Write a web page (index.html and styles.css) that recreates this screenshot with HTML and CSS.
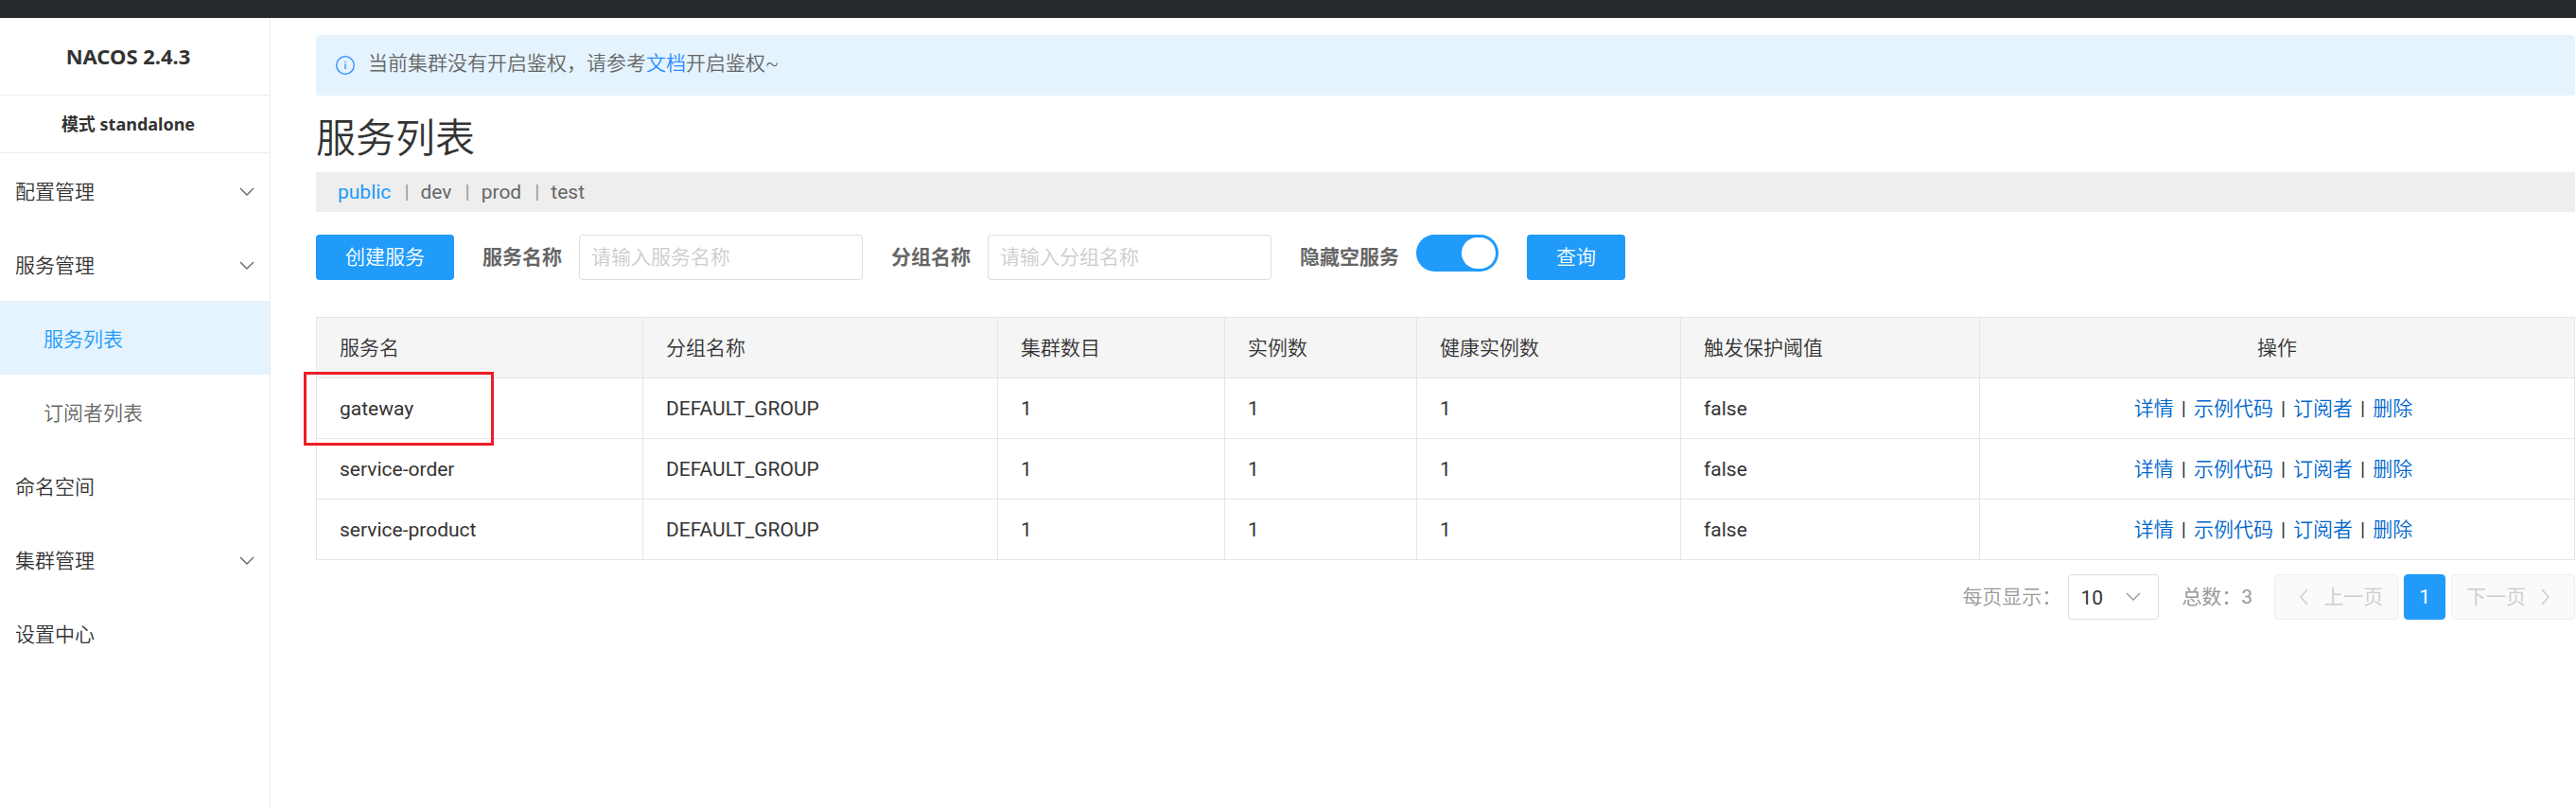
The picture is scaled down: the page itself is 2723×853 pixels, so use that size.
FILE: index.html
```html
<!DOCTYPE html>
<html lang="zh-CN">
<head>
<meta charset="utf-8">
<title>Nacos</title>
<link rel="stylesheet" href="styles.css">
</head>
<body>
<header class="topbar"></header>
<div class="shell">
  <aside class="sidebar">
    <h1 class="brand">NACOS 2.4.3</h1>
    <h2 class="mode">模式 standalone</h2>
    <nav class="menu">
      <a class="menu-item" href="#">配置管理<svg class="chevron" viewBox="0 0 16 10"><path d="M1 1l7 7 7-7"/></svg></a>
      <a class="menu-item" href="#">服务管理<svg class="chevron" viewBox="0 0 16 10"><path d="M1 1l7 7 7-7"/></svg></a>
      <a class="menu-item sub active" href="#">服务列表</a>
      <a class="menu-item sub" href="#">订阅者列表</a>
      <a class="menu-item" href="#">命名空间</a>
      <a class="menu-item" href="#">集群管理<svg class="chevron" viewBox="0 0 16 10"><path d="M1 1l7 7 7-7"/></svg></a>
      <a class="menu-item" href="#">设置中心</a>
    </nav>
  </aside>
  <main class="main">
    <div class="notice">
      <svg class="info" viewBox="0 0 20 20"><circle cx="10" cy="10" r="9.3"/><path d="M10 8.5v5.5M10 5.8v1.4"/></svg>
      <p class="notice-text">当前集群没有开启鉴权，请参考<a href="#">文档</a>开启鉴权~</p>
    </div>
    <h2 class="title">服务列表</h2>
    <div class="namespaces">
      <a class="ns current" href="#">public</a><span class="bar">|</span><a class="ns" href="#">dev</a><span class="bar">|</span><a class="ns" href="#">prod</a><span class="bar">|</span><a class="ns" href="#">test</a>
    </div>
    <form class="filters">
      <button class="btn" type="button">创建服务</button>
      <div class="field"><label for="service">服务名称</label><input class="text" id="service" type="text" placeholder="请输入服务名称"></div>
      <div class="field"><label for="group">分组名称</label><input class="text" id="group" type="text" placeholder="请输入分组名称"></div>
      <div class="field"><label for="hide">隐藏空服务</label><input class="switch" id="hide" type="checkbox" checked></div>
      <button class="btn" type="button">查询</button>
    </form>
    <table class="table">
      <colgroup><col class="c-name"><col class="c-group"><col class="c-cluster"><col class="c-inst"><col class="c-health"><col class="c-limit"><col></colgroup>
      <thead>
        <tr><th>服务名</th><th>分组名称</th><th>集群数目</th><th>实例数</th><th>健康实例数</th><th>触发保护阈值</th><th class="ops-head">操作</th></tr>
      </thead>
      <tbody>
        <tr><td class="marked">gateway</td><td>DEFAULT_GROUP</td><td>1</td><td>1</td><td>1</td><td>false</td><td class="ops"><a href="#">详情</a><span class="sep">|</span><a href="#">示例代码</a><span class="sep">|</span><a href="#">订阅者</a><span class="sep">|</span><a href="#">删除</a></td></tr>
        <tr><td>service-order</td><td>DEFAULT_GROUP</td><td>1</td><td>1</td><td>1</td><td>false</td><td class="ops"><a href="#">详情</a><span class="sep">|</span><a href="#">示例代码</a><span class="sep">|</span><a href="#">订阅者</a><span class="sep">|</span><a href="#">删除</a></td></tr>
        <tr><td>service-product</td><td>DEFAULT_GROUP</td><td>1</td><td>1</td><td>1</td><td>false</td><td class="ops"><a href="#">详情</a><span class="sep">|</span><a href="#">示例代码</a><span class="sep">|</span><a href="#">订阅者</a><span class="sep">|</span><a href="#">删除</a></td></tr>
      </tbody>
    </table>
    <div class="pager">
      <label class="size-label" for="size">每页显示：</label>
      <div class="size">
        <select id="size"><option>10</option></select>
        <svg class="chevron" viewBox="0 0 16 10"><path d="M1 1l7 7 7-7"/></svg>
      </div>
      <span class="total">总数：3</span>
      <div class="pages">
        <button class="page" type="button" disabled><svg class="arrow" viewBox="0 0 10 18"><path d="M9 1L2 9l7 8"/></svg>上一页</button>
        <button class="page now" type="button">1</button>
        <button class="page" type="button" disabled>下一页<svg class="arrow" viewBox="0 0 10 18"><path d="M1 1l7 8-7 8"/></svg></button>
      </div>
    </div>
  </main>
</div>
</body>
</html>
```
FILE: styles.css
```css
*, *::before, *::after { box-sizing: border-box; }
body {
  margin: 0;
  min-height: 100vh;
  display: flex;
  flex-direction: column;
  background: #fff;
  color: #333;
  font: 400 21px/30px Roboto, "Noto Sans CJK SC", sans-serif;
}
a { color: inherit; text-decoration: none; }
h1, h2, p { margin: 0; }
button, input, select { font: inherit; }
svg { fill: none; stroke: currentColor; flex: none; }

.topbar { height: 19px; background: #252a2f; }
.shell { flex: 1; display: flex; }

.sidebar { width: 286px; flex: none; border-right: 1px solid #ebebeb; }
.brand, .mode {
  padding-right: 14px;
  border-bottom: 1px solid #ebebeb;
  text-align: center;
  font-family: "Noto Sans", "Noto Sans CJK SC", sans-serif;
  font-weight: 700;
}
.brand { font-size: 22px; line-height: 80px; padding-bottom: 1px; }
.mode { font-size: 18px; line-height: 60px; }
.menu-item {
  display: flex;
  align-items: center;
  justify-content: space-between;
  height: 78px;
  padding: 3px 16px 0;
}
.menu-item, .notice, .title, .btn, .text, .table th, .ops a, .pager label, .page:disabled { font-weight: 350; }
.menu-item.sub { padding-left: 46px; color: #666; }
.menu-item.active { background: #e4f3fe; color: #209bfa; }
.chevron { width: 16px; height: 10px; color: #666; stroke-width: 1.4; }

.main { flex: 1; min-width: 0; padding: 18px 1px 0 48px; }
.notice {
  display: flex;
  align-items: center;
  gap: 14px;
  padding: 15px 21px 19px;
  border-radius: 4px;
  background: #e4f3fe;
  color: #666;
}
.notice a { color: #298dff; }
.info { width: 20px; height: 20px; margin-top: 4px; color: #298dff; stroke-width: 1.3; }
.title { padding: 16px 0 5px; font-size: 42px; line-height: 60px; }
.namespaces { display: flex; padding: 6px 23px; background: #eee; color: #666; }
.ns.current { color: #209bfa; }
.bar { padding: 0 12px 0 14px; color: #999; }

.filters { display: flex; gap: 30px; margin-top: 24px; }
.btn {
  height: 48px;
  padding: 0 31px;
  border: 0;
  border-radius: 4px;
  background: #209bfa;
  color: #fff;
}
.field { display: flex; gap: 18px; }
.field label { font-weight: 700; line-height: 48px; color: #666; }
.text { width: 300px; height: 48px; padding: 0 12px; border: 1px solid #ddd; border-radius: 4px; background: #fff; color: #333; }
.text::placeholder { color: #ccc; opacity: 1; }
.switch {
  appearance: none;
  width: 87px;
  height: 39px;
  margin: 0;
  padding: 3px;
  border-radius: 20px;
  background: #209bfa;
  display: flex;
  justify-content: flex-end;
}
.switch::before { content: ""; width: 36px; height: 33px; border-radius: 18px; background: #fff; }

.table { width: 100%; margin-top: 39px; border-collapse: collapse; table-layout: fixed; }
.table th, .table td { height: 64px; padding: 0 24px; border: 1px solid #e6e6e6; text-align: left; }
.table th { background: #f5f5f5; }
.c-name { width: 345px; }
.c-group { width: 375px; }
.c-cluster { width: 240px; }
.c-inst { width: 203px; }
.c-health { width: 279px; }
.c-limit { width: 316px; }
.table .ops, .table .ops-head { text-align: center; }
.table .ops { padding-right: 32px; }
.ops a { color: #06c; }
.sep { padding: 0 8px; }
.marked { position: relative; }
.marked::after {
  content: "";
  position: absolute;
  top: -7px;
  left: -14px;
  width: 201px;
  height: 78px;
  border: 3px solid #ee1c25;
}

.pager { display: flex; justify-content: flex-end; margin-top: 15px; line-height: 48px; color: #999; }
.size-label { margin-right: 7px; }
.size { display: grid; align-items: center; width: 96px; margin-right: 24px; }
.size select {
  grid-area: 1 / 1;
  appearance: none;
  height: 48px;
  padding: 0 12px;
  border: 1px solid #ddd;
  border-radius: 4px;
  background: #fff;
  color: #333;
}
.size .chevron { grid-area: 1 / 1; justify-self: end; margin-right: 19px; pointer-events: none; color: #999; }
.total { margin-right: 23px; }
.pages { display: flex; gap: 6px; }
.page {
  display: flex;
  align-items: center;
  gap: 16px;
  height: 48px;
  padding: 0 15px;
  border: 1px solid #eee;
  border-radius: 4px;
  background: #fafafa;
  color: #ccc;
}
.page:first-child { padding-left: 25px; }
.page:last-child { padding-right: 25px; }
.page.now { border-color: #209bfa; background: #209bfa; color: #fff; }
.arrow { width: 10px; height: 18px; stroke-width: 1.4; }
```
